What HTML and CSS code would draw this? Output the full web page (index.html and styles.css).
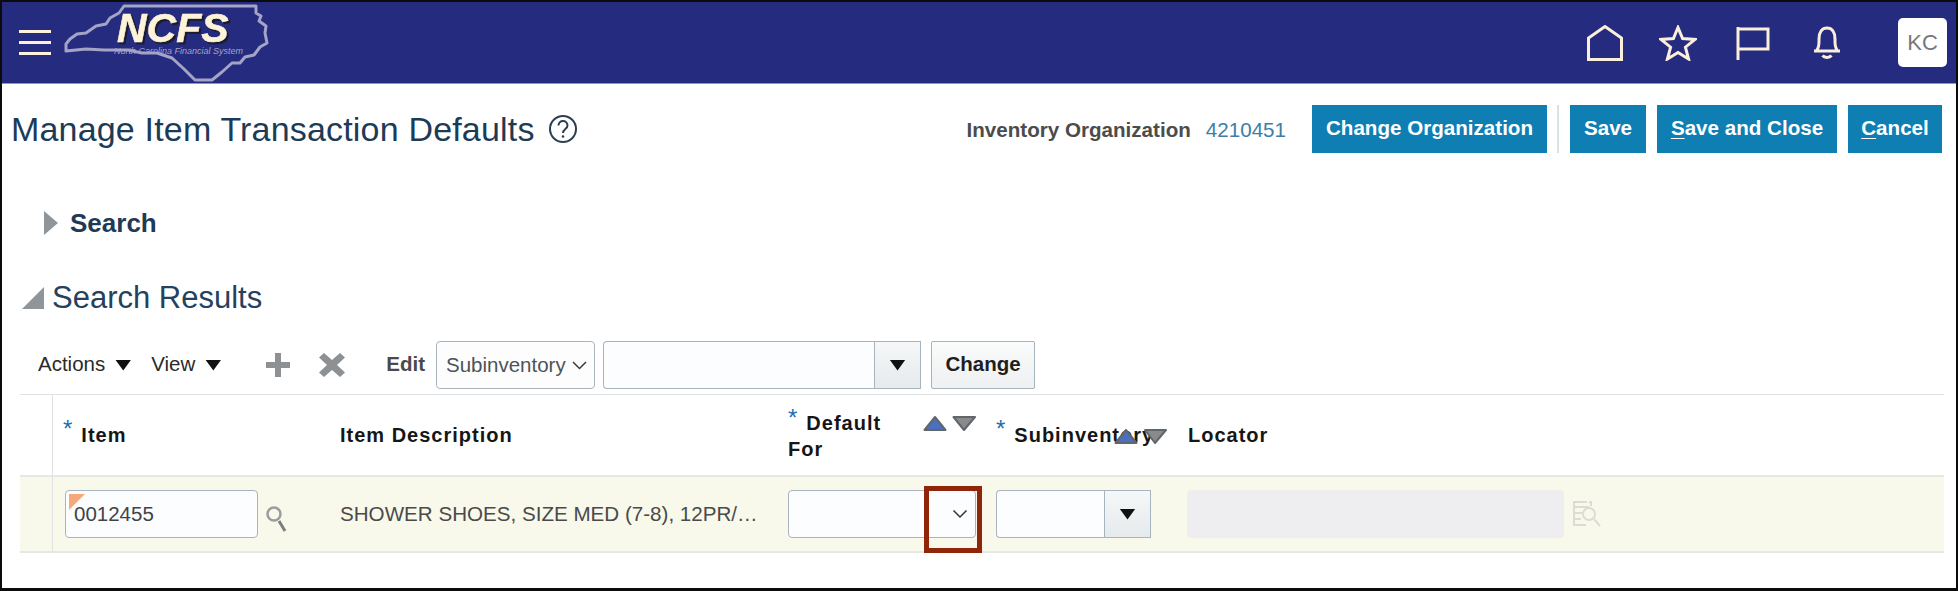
FILE: index.html
```html
<!DOCTYPE html>
<html lang="en">
<head>
<meta charset="utf-8">
<title>Manage Item Transaction Defaults</title>
<link rel="stylesheet" href="styles.css">
</head>
<body>
<div class="frame">
  <header class="topbar">
    <div class="burger"><span></span><span></span><span></span></div>
    <svg class="logo" width="206" height="80" viewBox="0 0 206 80">
      <path class="logo-shape" d="M2 41 L6 36 L13 31 L22 30 L32 23 L42 21 L46 15 L55 10 L60 3 L192 3 L192 10 L197 13 L195 18 L202 23 L201 30 L203 40 L196 44 L190 52 L181 54 L176 60 L168 60 L158 69 L148 77 L131 77 L120 66 L108 55 L93 50 L78 50 L64 47 L40 47 L22 46 L2 48 Z"/>
      <text class="logo-sub" x="50" y="51">North Carolina Financial System</text>
      <text class="logo-name" x="53" y="39">NCFS</text>
    </svg>
    <nav class="top-icons">
      <svg width="36" height="36" viewBox="0 0 36 36"><path d="M1.5 34.5V13L18 1.5 34.5 13V34.5Z"/></svg>
      <svg width="38" height="36" viewBox="0 0 38 36"><path d="M19 2.5 23.6 13.6 36 14.4 26.4 22.2 29.6 34 19 27.5 8.4 34 11.6 22.2 2 14.4 14.4 13.6Z"/></svg>
      <svg width="34" height="34" viewBox="0 0 34 34"><path d="M2 34V1M2 3H32V23H2"/></svg>
      <svg width="30" height="34" viewBox="0 0 30 34"><path d="M2 25H28M4.5 25C7.5 21 7 17 7 13 7 6 10 2 15 2S23 6 23 13C23 17 22.5 21 25.500 25M10.500 29.500C12.500 32 17.500 32 19.500 29.500"/></svg>
      <div class="avatar">KC</div>
    </nav>
  </header>

  <section class="page-head">
    <h1 class="title">Manage Item Transaction Defaults</h1>
    <svg class="help" width="30" height="30" viewBox="0 0 30 30"><circle cx="15" cy="15" r="13"/><path d="M10.500 11.500C10.500 5.500 19.500 5.500 19.500 11.500 19.500 15 15 15 15 19"/><circle class="dot" cx="15" cy="22.500" r="1.300"/></svg>
    <div class="org">
      <span class="org-label">Inventory Organization</span>
      <span class="org-value">4210451</span>
    </div>
    <button class="btn btn-org">Change Organization</button>
    <span class="sep"></span>
    <button class="btn btn-save">Save</button>
    <button class="btn btn-close"><u>S</u>ave and Close</button>
    <button class="btn btn-cancel"><u>C</u>ancel</button>
  </section>

  <section class="search-head">
    <span class="tri-right"></span>
    <h2>Search</h2>
  </section>

  <section class="results-head">
    <span class="tri-open"></span>
    <h2>Search Results</h2>
  </section>

  <section class="toolbar">
    <span class="menu menu-actions">Actions</span><span class="caret caret-actions"></span>
    <span class="menu menu-view">View</span><span class="caret caret-view"></span>
    <svg class="tool-plus" width="24" height="24" viewBox="0 0 24 24"><path d="M9 0H15V9H24V15H15V24H9V15H0V9H9Z"/></svg>
    <svg class="tool-x" width="26" height="24" viewBox="0 0 26 24"><path d="M5 0 13 7 21 0 26 4.500 18 12 26 19.500 21 24 13 17 5 24 0 19.500 8 12 0 4.500Z"/></svg>
    <span class="edit-label">Edit</span>
    <div class="select-box">Subinventory<svg width="15" height="9" viewBox="0 0 15 9"><path d="M1 1 7.500 7.500 14 1"/></svg></div>
    <div class="combo combo-wide"><div class="combo-input"></div><div class="combo-btn"><span class="caret"></span></div></div>
    <button class="btn-change">Change</button>
  </section>

  <section class="grid">
    <div class="cell head gutter"></div>
    <div class="cell head col-item"><span class="req">*</span>Item</div>
    <div class="cell head col-desc">Item Description</div>
    <div class="cell head col-for">
      <span class="for-text"><span class="req">*</span>Default<br>For</span>
      <svg class="sort sort-a" width="54" height="18" viewBox="0 0 54 18"><path class="up" d="M12 2 22.500 15H1.500Z"/><path class="down" d="M30.500 2H52L41 15Z"/></svg>
    </div>
    <div class="cell head col-sub"><span class="req">*</span>Subinventory
      <svg class="sort sort-b" width="54" height="18" viewBox="0 0 54 18"><path class="up" d="M12 2 22.500 15H1.500Z"/><path class="down" d="M31 2H52L41 15Z"/></svg>
    </div>
    <div class="cell head col-loc">Locator</div>

    <div class="cell row gutter"></div>
    <div class="cell row col-item">
      <div class="field field-item">0012455<span class="flag"></span></div>
      <svg class="lens" width="22" height="28" viewBox="0 0 22 28"><circle cx="9" cy="9" r="6.500"/><path class="handle" d="M14 16 20 26"/></svg>
    </div>
    <div class="cell row col-desc">SHOWER SHOES, SIZE MED (7-8), 12PR/…</div>
    <div class="cell row col-for">
      <div class="field field-for"><svg width="16" height="10" viewBox="0 0 16 10"><path d="M1.500 1.500 8 8 14.500 1.500"/></svg></div>
      <div class="callout"></div>
    </div>
    <div class="cell row col-sub">
      <div class="combo combo-sub"><div class="combo-input"></div><div class="combo-btn"><span class="caret"></span></div></div>
    </div>
    <div class="cell row col-loc">
      <div class="field-off"></div>
      <svg class="lov" width="28" height="28" viewBox="0 0 28 28"><path d="M14 2H1V7H16M1 7V13H9M1 13V19H8M1 19V25H13M16 2H18V6"/><circle cx="16" cy="14" r="6"/><path d="M21 19 27 26"/></svg>
    </div>
  </section>
</div>
</body>
</html>
```

FILE: styles.css
```css
* { box-sizing: border-box; }
html, body { margin: 0; padding: 0; background: #fff; }
body { width: 1958px; height: 591px; overflow: hidden; font-family: "Liberation Sans", Arial, sans-serif; }
.frame { width: 1958px; height: 591px; border: 2px solid #0b0b0b; border-bottom-width: 3px; display: flex; flex-direction: column; overflow: hidden; }

/* top bar */
.topbar { flex: none; height: 82px; background: #252b7f; border-bottom: 1px solid #8f95c9; display: flex; align-items: center; padding-left: 17px; position: relative; }
.burger { width: 32px; display: flex; flex-direction: column; gap: 8px; }
.burger span { display: block; height: 3px; background: #fdf1dd; }
.logo { margin-left: 13px; align-self: flex-start; margin-top: 1px; overflow: visible; }
.logo-shape { fill: none; stroke: #a4a4c6; stroke-width: 3; stroke-linejoin: round; }
.logo-name { font: italic bold 41px "Liberation Sans", Arial, sans-serif; fill: #fdf3d8; stroke: #fdf3d8; stroke-width: .6; filter: drop-shadow(2px 2px 0 #1b1b2e); }
.logo-sub { font: italic 9px "Liberation Sans", Arial, sans-serif; fill: #a4a4c6; }
.top-icons { margin-left: auto; display: flex; align-items: center; padding-right: 9px; }
.top-icons svg { fill: none; stroke: #fbeeda; stroke-width: 3; margin-right: 36px; }
.top-icons svg:nth-child(2) { margin-right: 39px; }
.top-icons svg:nth-child(3) { margin-right: 42px; }
.top-icons svg:nth-child(4) { margin-right: 56px; }
.avatar { width: 49px; height: 49px; background: #fff; border-radius: 5px; color: #77787c; font-size: 22px; display: flex; align-items: center; justify-content: center; }

/* page header */
.page-head { flex: none; display: flex; align-items: center; height: 48px; margin-top: 21px; padding: 0 14px 0 9px; }
.title { margin: 0; font-size: 34px; font-weight: 400; letter-spacing: .18px; color: #1c3b57; white-space: nowrap; line-height: 48px; }
.help { margin-left: 13px; fill: none; stroke: #2c3f50; stroke-width: 2; }
.help .dot { fill: #2c3f50; stroke: none; }
.org { margin-left: auto; display: flex; gap: 15px; font-size: 20.600px; white-space: nowrap; padding-top: 1px; }
.org-label { font-weight: 700; color: #4c4c4c; }
.org-value { color: #3c7ea6; }
.btn { height: 48px; border: 0; background: #0e7eb3; color: #fff; font: 700 20.600px "Liberation Sans", Arial, sans-serif; padding: 0 0 2px; }
.btn u { text-decoration-thickness: 1px; text-underline-offset: 3px; }
.btn-org { width: 235px; margin-left: 26px; }
.sep { width: 2px; height: 48px; background: #d8e3e7; margin: 0 11px 0 10px; }
.btn-save { width: 76px; }
.btn-close { width: 180px; margin-left: 11px; }
.btn-cancel { width: 94px; margin-left: 11px; }

/* disclosure headers */
.search-head { flex: none; display: flex; align-items: center; height: 30px; margin-top: 55px; padding-left: 42px; }
.search-head h2 { margin: 0 0 0 12px; font-size: 26px; font-weight: 700; color: #1f3a55; }
.tri-right { width: 14px; height: 24px; background: #8f9598; clip-path: polygon(0 0, 100% 50%, 0 100%); }
.results-head { flex: none; display: flex; align-items: center; height: 30px; margin-top: 45px; padding-left: 20px; }
.results-head h2 { margin: 0 0 0 8px; font-size: 31px; font-weight: 400; color: #25415c; white-space: nowrap; }
.tri-open { width: 22px; height: 22px; background: #8f9598; clip-path: polygon(100% 0, 100% 100%, 0 100%); }

/* toolbar */
.toolbar { flex: none; display: flex; align-items: center; height: 48px; margin-top: 28px; padding-left: 36px; }
.menu { font-size: 20.500px; color: #2a2a2a; padding-bottom: 2px; }
.caret { display: inline-block; width: 16px; height: 11px; background: #111; clip-path: polygon(0 0, 100% 0, 50% 100%); }
.caret-actions { margin-left: 10px; }
.menu-view { margin-left: 20px; }
.caret-view { margin-left: 10px; }
.tool-plus { margin-left: 45px; fill: #8d9194; }
.tool-x { margin-left: 29px; fill: #8d9194; }
.edit-label { margin-left: 41px; font-size: 20.500px; font-weight: 700; color: #4a4a4a; padding-bottom: 2px; }
.select-box { margin-left: 11px; width: 159px; height: 48px; border: 1px solid #a9b5bd; border-radius: 4px; background: #fdfdfe; display: flex; align-items: center; gap: 6px; padding: 0 0 0 9px; font-size: 20.500px; color: #4d5358; }
.select-box svg { fill: none; stroke: #3b3b3b; stroke-width: 1.500; }
.combo { display: flex; height: 48px; }
.combo-wide { margin-left: 8px; width: 318px; }
.combo-input { flex: 1; background: #fcfdff; border: 1px solid #a9b5bd; border-right: 0; border-radius: 4px 0 0 4px; }
.combo-btn { width: 47px; background: linear-gradient(#f5f7f8, #e6eaec); border: 1px solid #a5b4bf; display: flex; align-items: center; justify-content: center; }
.btn-change { margin-left: 10px; width: 104px; height: 48px; background: linear-gradient(#fafbfb, #eef0f1); border: 1px solid #a5b4bf; border-radius: 2px; font: 700 20.500px "Liberation Sans", Arial, sans-serif; color: #1e1e1e; padding: 0 0 2px; }

/* table */
.grid { flex: none; margin: 5px 12px 0 18px; display: grid; grid-template-columns: 33px 277px 448px 208px 191px 1fr; grid-template-rows: 82px 76px; border-top: 1px solid #e0e3e3; }
.cell { position: relative; display: flex; align-items: center; }
.head { border-bottom: 2px solid #e6e8e4; font-size: 20px; font-weight: 700; letter-spacing: 1px; color: #161616; }
.row { background: #f8f9ea; border-bottom: 2px solid #e6e8e4; font-size: 20.600px; color: #4a4a4a; }
.gutter { border-right: 1px solid #dfe2e2; }
.col-item { padding-left: 10px; }
.row.col-item { padding-left: 12px; }
.col-desc { padding-left: 10px; white-space: nowrap; }
.col-for { padding-left: 10px; }
.col-sub { padding-left: 10px; white-space: nowrap; }
.col-loc { padding-left: 11px; }
.row.col-loc { padding-left: 10px; }
.row.col-desc { letter-spacing: 0; }
.req { color: #1a6fb4; font-weight: 400; font-size: 24px; margin-right: 9px; line-height: 18px; position: relative; letter-spacing: 0; }
.head .req { align-self: center; top: -6px; }
.for-text { line-height: 26px; position: relative; top: 1px; }
.for-text .req { top: -4px; }
.sort { position: absolute; stroke: #5f666c; stroke-width: 2; stroke-linejoin: round; }
.sort .up { fill: #4b70c0; }
.sort .down { fill: #8a8a8a; }
.sort-a { left: 145px; top: 20px; }
.sort-b { left: 128px; top: 33px; }
.field { height: 48px; background: #fcfdff; border: 1px solid #a9b5bd; border-radius: 4px; position: relative; }
.field-item { width: 193px; padding-left: 8px; line-height: 46px; color: #3f4447; font-size: 20.500px; }
.flag { position: absolute; left: 3px; top: 3px; width: 16px; height: 16px; background: #f6a87a; clip-path: polygon(0 0, 100% 0, 0 100%); }
.lens { margin-left: 7px; margin-top: 9px; fill: none; stroke: #9a9d9e; stroke-width: 2.500; }
.lens .handle { stroke: #7d8081; stroke-width: 3; }
.field-for { width: 188px; display: flex; align-items: center; justify-content: flex-end; padding-right: 7px; }
.field-for svg { fill: none; stroke: #333; stroke-width: 1.500; }
.callout { position: absolute; left: 146px; top: 9px; width: 58px; height: 67px; border: 5px solid #8f2609; }
.combo-sub { width: 155px; }
.field-off { width: 377px; height: 48px; background: #eeeef0; border-radius: 4px; }
.lov { margin-left: 9px; fill: none; stroke: #dcdcd4; stroke-width: 2; }
```
